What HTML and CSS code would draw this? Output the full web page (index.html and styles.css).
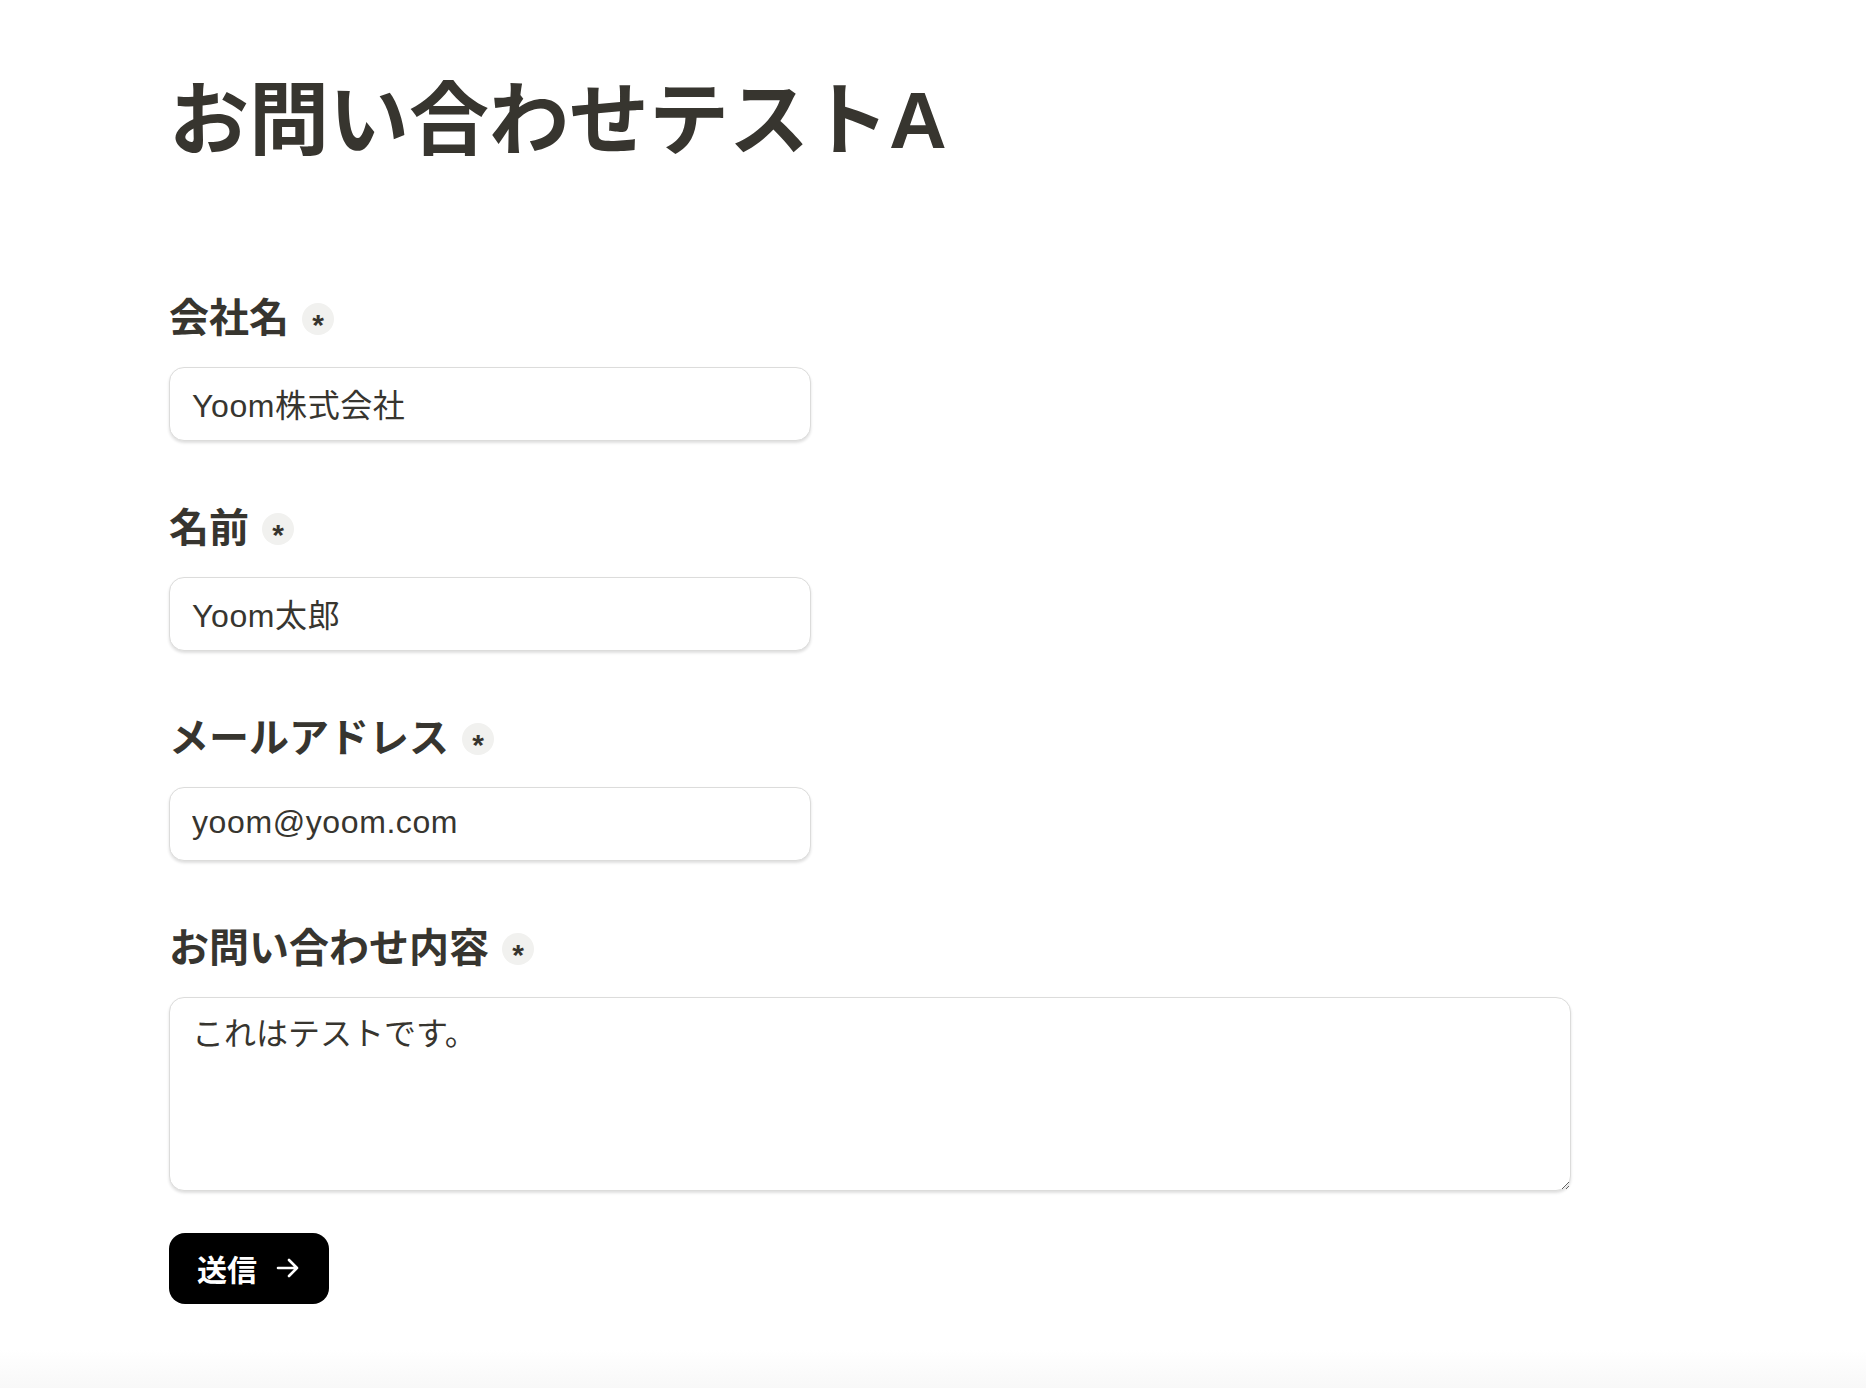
FILE: index.html
```html
<!DOCTYPE html>
<html lang="ja">
<head>
<meta charset="utf-8">
<title>お問い合わせテストA</title>
<link rel="stylesheet" href="styles.css">
</head>
<body>
<div class="page">
  <main class="form">
    <h1 class="title">お問い合わせテストA</h1>
    <div class="field">
      <div class="label-row"><span class="label">会社名</span><span class="req">*</span></div>
      <input class="text-input" type="text" value="Yoom株式会社">
    </div>
    <div class="field">
      <div class="label-row"><span class="label">名前</span><span class="req">*</span></div>
      <input class="text-input" type="text" value="Yoom太郎">
    </div>
    <div class="field">
      <div class="label-row"><span class="label">メールアドレス</span><span class="req">*</span></div>
      <input class="text-input" type="text" value="yoom@yoom.com">
    </div>
    <div class="field">
      <div class="label-row"><span class="label">お問い合わせ内容</span><span class="req">*</span></div>
      <textarea class="text-area">これはテストです。</textarea>
    </div>
    <button class="submit" type="button"><span class="submit-text">送信</span><svg class="arrow" viewBox="0 0 26 26" width="26" height="26" aria-hidden="true"><path d="M3 13H22M14 5L22 13L14 21" fill="none" stroke="#fff" stroke-width="2.6" stroke-linecap="round" stroke-linejoin="round"/></svg></button>
  </main>
  <div class="bottom-fade"></div>
</div>
</body>
</html>
```

FILE: styles.css
```css
html, body {
  margin: 0;
  padding: 0;
  background: #ffffff;
}
body {
  font-family: "Liberation Sans", "Noto Sans CJK JP", sans-serif;
  color: #37352f;
}
.page {
  min-height: 100vh;
  display: flex;
  flex-direction: column;
}
.form {
  padding: 73px 0 0 169px;
  display: flex;
  flex-direction: column;
  align-items: flex-start;
}
.title {
  margin: 0 0 125px 0;
  font-size: 80px;
  line-height: 96px;
  font-weight: 700;
  letter-spacing: 0;
  color: #37352f;
}
.field {
  display: flex;
  flex-direction: column;
  align-items: flex-start;
  margin-bottom: 63px;
}
.field:last-of-type {
  margin-bottom: 42px;
}
.label-row {
  display: flex;
  align-items: center;
  height: 49px;
  margin-bottom: 24px;
}
.label {
  font-size: 40px;
  line-height: 49px;
  font-weight: 700;
  color: #37352f;
}
.req {
  box-sizing: border-box;
  margin-left: 13px;
  width: 32px;
  height: 32px;
  padding-top: 12px;
  border-radius: 50%;
  background: #f1f1ef;
  color: #37352f;
  font-family: "Liberation Sans", sans-serif;
  font-size: 30px;
  font-weight: 700;
  line-height: 20px;
  text-align: center;
}
.text-input {
  box-sizing: border-box;
  width: 642px;
  height: 74px;
  padding: 0 22px 3px 22px;
  border: 1px solid #dcdcdb;
  border-radius: 15px;
  box-shadow: 0 2px 3px rgba(0, 0, 0, 0.13);
  font-family: "Liberation Sans", "Noto Sans CJK JP", sans-serif;
  font-size: 32px;
  letter-spacing: 0.6px;
  color: #37352f;
  background: #fff;
  outline: none;
}
.text-area {
  box-sizing: border-box;
  width: 1402px;
  height: 194px;
  padding: 12px 22px;
  border: 1px solid #dcdcdb;
  border-radius: 15px;
  box-shadow: 0 2px 3px rgba(0, 0, 0, 0.13);
  font-family: "Liberation Sans", "Noto Sans CJK JP", sans-serif;
  font-size: 32px;
  line-height: 48px;
  color: #37352f;
  background: #fff;
  outline: none;
  resize: vertical;
}
.submit {
  display: flex;
  align-items: center;
  gap: 18px;
  height: 71px;
  padding: 0 28px 2px 28px;
  border: none;
  border-radius: 16px;
  background: #000;
  color: #fff;
  font-family: "Liberation Sans", "Noto Sans CJK JP", sans-serif;
  font-size: 30px;
  font-weight: 700;
  cursor: pointer;
}
.arrow {
  display: block;
}
.bottom-fade {
  margin-top: auto;
  height: 38px;
  background: linear-gradient(to bottom, #ffffff, #f8f8f8);
}
```
